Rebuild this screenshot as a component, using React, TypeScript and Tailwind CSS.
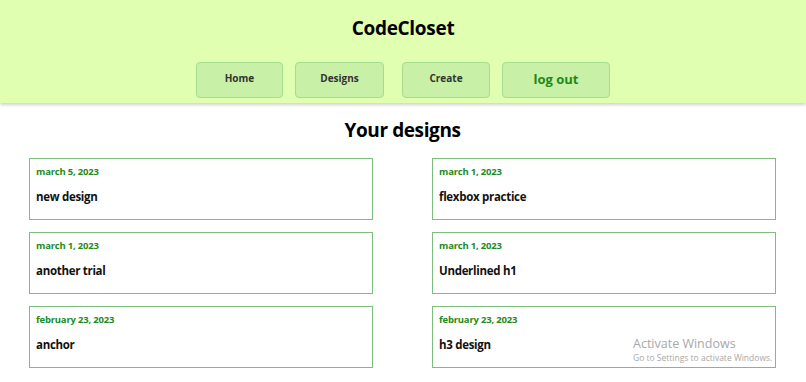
const designs = [
  { date: 'march 5, 2023', title: 'new design' },
  { date: 'march 1, 2023', title: 'flexbox practice' },
  { date: 'march 1, 2023', title: 'another trial' },
  { date: 'march 1, 2023', title: 'Underlined h1' },
  { date: 'february 23, 2023', title: 'anchor' },
  { date: 'february 23, 2023', title: 'h3 design' },
];

function NavButton({ label, className }: { label: string; className: string }) {
  return (
    <button
      className={`h-[36px] rounded-[4px] border border-[#a6dc8e] bg-[#c8f0a6] font-bold ${className}`}
    >
      {label}
    </button>
  );
}

export default function App() {
  return (
    <div
      className="relative min-h-[382px] bg-white text-[#111]"
      style={{ fontFamily: '"Open Sans", "Noto Sans", sans-serif' }}
    >
      {/* Header */}
      <header className="h-[103px] bg-[#e0ffb0] shadow-[0_2px_3px_rgba(0,0,0,0.18)] flex flex-col items-center">
        <h1 className="mt-[14px] text-[19px] font-bold leading-[28px] tracking-[-0.3px] text-black">CodeCloset</h1>
        <nav className="mt-[20px] flex">
          <NavButton label="Home" className="w-[87px] pb-[4px] text-[10px] text-[#333]" />
          <NavButton label="Designs" className="ml-[12px] w-[89px] pb-[4px] text-[10px] text-[#333]" />
          <NavButton label="Create" className="ml-[18px] w-[88px] pb-[4px] text-[10px] text-[#333]" />
          <NavButton label="log out" className="ml-[12px] w-[108px] text-[13px] text-[#1c8a1c]" />
        </nav>
      </header>

      {/* Designs */}
      <main className="pl-[29px] pr-[30px]">
        <h2 className="pt-[14px] text-center text-[19px] font-bold leading-[26px] tracking-[-0.4px] text-black">Your designs</h2>
        <div className="mt-[15px] grid grid-cols-2 gap-x-[59px] gap-y-[12px]">
          {designs.map((d, i) => (
            <div key={i} className="h-[62px] border border-[#7dbd7d] px-[6px] pt-[6px]">
              <p className="text-[9.5px] font-bold leading-[14px] tracking-[-0.2px] text-[#238a23]">{d.date}</p>
              <p className="mt-[10px] text-[11.5px] font-bold leading-[16px] tracking-[-0.3px] text-[#111]">{d.title}</p>
            </div>
          ))}
        </div>
      </main>

      {/* Watermark */}
      <div className="pointer-events-none absolute left-[633px] top-[335px] text-[#a8a8a8]">
        <p className="text-[12.5px] leading-[17px]">Activate Windows</p>
        <p className="text-[8.5px] leading-[12px]">Go to Settings to activate Windows.</p>
      </div>
    </div>
  );
}
